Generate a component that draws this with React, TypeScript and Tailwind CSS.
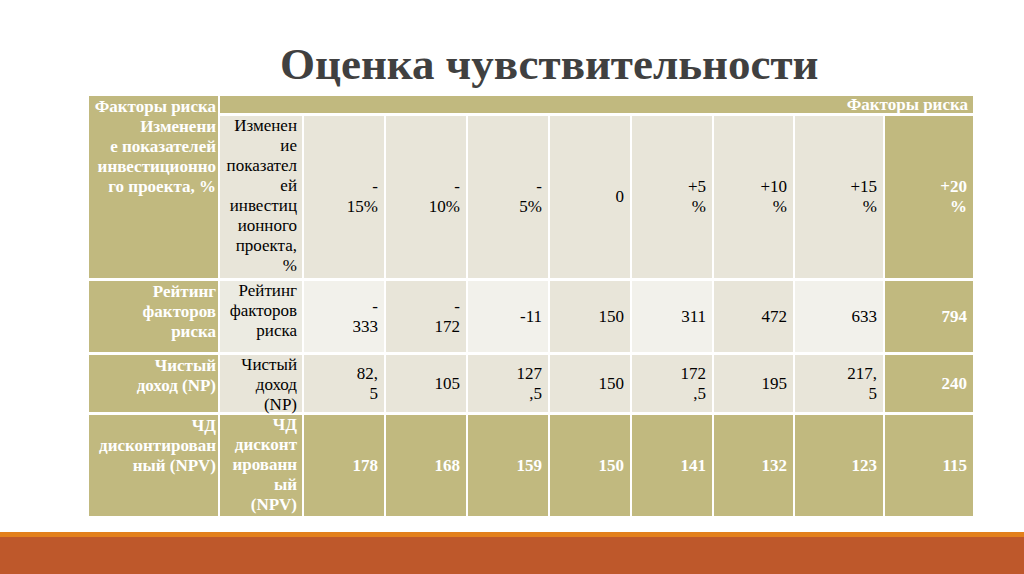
const OLIVE = "bg-[#c1b97f]";
const DARK = "bg-[#e8e5d9]";
const LIGHT = "bg-[#f2f1eb]";

type Cell = { text: string[]; bg: string; strong?: boolean };

const dataCell = (text: string[], bg: string, strong = false): Cell => ({ text, bg, strong });

const headerValues = [["-", "15%"], ["-", "10%"], ["-", "5%"], ["0"], ["+5", "%"], ["+10", "%"], ["+15", "%"]];
const rating = [["-", "333"], ["-", "172"], ["-11"], ["150"], ["311"], ["472"], ["633"]];
const income = [["82,", "5"], ["105"], ["127", ",5"], ["150"], ["172", ",5"], ["195"], ["217,", "5"]];
const npv = [["178"], ["168"], ["159"], ["150"], ["141"], ["132"], ["123"]];

function Lines({ lines }: { lines: string[] }) {
  return (
    <>
      {lines.map((l, i) => (
        <span key={i} className="block whitespace-nowrap">
          {l}
        </span>
      ))}
    </>
  );
}

function Value({ c }: { c: Cell }) {
  return (
    <div
      className={`${c.bg} flex flex-col justify-center items-end pr-[6px] text-right ${
        c.strong ? "font-bold text-white" : "text-black"
      }`}
    >
      <Lines lines={c.text} />
    </div>
  );
}

function Label({ lines, bg, strong }: { lines: string[]; bg: string; strong?: boolean }) {
  return (
    <div className={`${bg} flex flex-col items-end pr-[5px] text-right ${strong ? "font-bold text-white" : "text-black"}`}>
      <Lines lines={lines} />
    </div>
  );
}

export default function App() {
  const ratingBg = (i: number) => (i % 2 === 0 ? LIGHT : DARK);
  return (
    <div className="w-[1024px] h-[574px] bg-white flex flex-col overflow-hidden [font-family:'Liberation_Serif','Times_New_Roman',serif]">
      <h1 className="mt-[38px] pl-[280px] h-[52px] leading-[52px] text-[45px] font-bold text-[#404040] whitespace-nowrap">
        Оценка чувствительности
      </h1>

      <div
        className="mt-[6px] ml-[89px] w-[884px] grid gap-x-[2px] gap-y-[3px] text-[17px] leading-[20px]
          grid-cols-[129px_82px_80px_80px_80px_80px_80px_79px_88px_88px]
          grid-rows-[17px_162px_71px_57px_101px]"
      >
        {/* first column spans the two header rows */}
        <div className={`${OLIVE} row-span-2 flex flex-col items-end pr-[2px] pt-[1px] font-bold text-white text-right`}>
          <Lines lines={["Факторы риска", "Изменени", "е показателей", "инвестиционно", "го проекта, %"]} />
        </div>
        <div className={`${OLIVE} col-span-9 flex justify-end items-start pr-[5px] font-bold text-white leading-[18px]`}>
          Факторы риска
        </div>

        {/* row: change of indicators */}
        <Label lines={["Изменен", "ие", "показател", "ей", "инвестиц", "ионного", "проекта,", "%"]} bg={DARK} />
        {headerValues.map((v, i) => (
          <Value key={i} c={dataCell(v, DARK)} />
        ))}
        <Value c={dataCell(["+20", "%"], OLIVE, true)} />

        {/* rating */}
        <div className={`${OLIVE} flex flex-col items-end pr-[2px] pt-[1px] font-bold text-white text-right`}>
          <Lines lines={["Рейтинг", "факторов", "риска"]} />
        </div>
        <Label lines={["Рейтинг", "факторов", "риска"]} bg="bg-[#ecebe2]" />
        {rating.map((v, i) => (
          <Value key={i} c={dataCell(v, ratingBg(i))} />
        ))}
        <Value c={dataCell(["794"], OLIVE, true)} />

        {/* net income */}
        <div className={`${OLIVE} flex flex-col items-end pr-[2px] pt-[1px] font-bold text-white text-right`}>
          <Lines lines={["Чистый", "доход (NP)"]} />
        </div>
        <Label lines={["Чистый", "доход", "(NP)"]} bg={DARK} />
        {income.map((v, i) => (
          <Value key={i} c={dataCell(v, DARK)} />
        ))}
        <Value c={dataCell(["240"], OLIVE, true)} />

        {/* NPV */}
        <div className={`${OLIVE} flex flex-col items-end pr-[2px] pt-[1px] font-bold text-white text-right`}>
          <Lines lines={["ЧД", "дисконтирован", "ный (NPV)"]} />
        </div>
        <Label lines={["ЧД", "дисконт", "ированн", "ый", "(NPV)"]} bg={OLIVE} strong />
        {npv.map((v, i) => (
          <Value key={i} c={dataCell(v, OLIVE, true)} />
        ))}
        <Value c={dataCell(["115"], OLIVE, true)} />
      </div>

      <div className="mt-auto h-[5px] bg-[#e3801c]" />
      <div className="h-[37px] bg-[#be582b]" />
    </div>
  );
}
